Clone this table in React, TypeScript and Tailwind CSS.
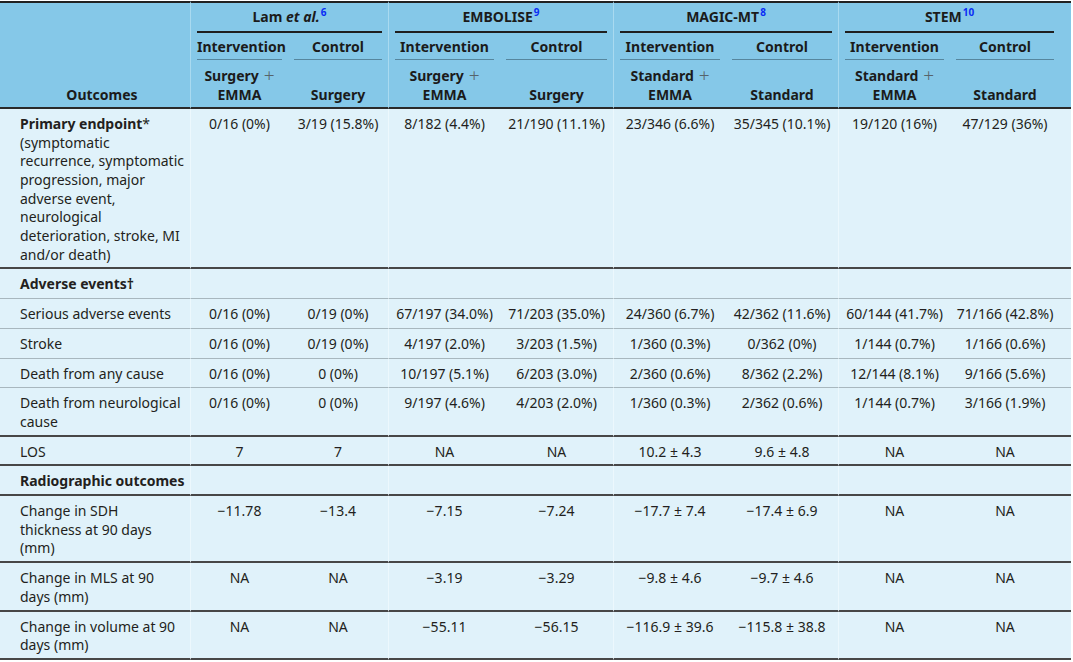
import React from "react";

type Row = {
    label: React.ReactNode;
    cells: string[];
    line: "dark" | "light";
    heading?: boolean;
};

const Sup = ({ n }: { n: string }) => (
    <sup className="text-[10px] font-bold text-[#0a2cf5] relative -top-[6px] ml-[1px]">{n}</sup>
);

const Plus = () => <span className="font-light text-[19px] leading-[0] text-[#56646b] relative top-[1px]"> +</span>;

const rows: Row[] = [
    {
        label: (
            <>
                <span className="font-bold">Primary endpoint</span>*<br />
                (symptomatic<br />
                recurrence, symptomatic<br />
                progression, major<br />
                adverse event,<br />
                neurological<br />
                deterioration, stroke, MI<br />
                and/or death)
            </>
        ),
        cells: ["0/16 (0%)", "3/19 (15.8%)", "8/182 (4.4%)", "21/190 (11.1%)", "23/346 (6.6%)", "35/345 (10.1%)", "19/120 (16%)", "47/129 (36%)"],
        line: "dark",
    },
    { label: "Adverse events†", cells: [], line: "light", heading: true },
    {
        label: "Serious adverse events",
        cells: ["0/16 (0%)", "0/19 (0%)", "67/197 (34.0%)", "71/203 (35.0%)", "24/360 (6.7%)", "42/362 (11.6%)", "60/144 (41.7%)", "71/166 (42.8%)"],
        line: "light",
    },
    {
        label: "Stroke",
        cells: ["0/16 (0%)", "0/19 (0%)", "4/197 (2.0%)", "3/203 (1.5%)", "1/360 (0.3%)", "0/362 (0%)", "1/144 (0.7%)", "1/166 (0.6%)"],
        line: "light",
    },
    {
        label: "Death from any cause",
        cells: ["0/16 (0%)", "0 (0%)", "10/197 (5.1%)", "6/203 (3.0%)", "2/360 (0.6%)", "8/362 (2.2%)", "12/144 (8.1%)", "9/166 (5.6%)"],
        line: "light",
    },
    {
        label: <>Death from neurological<br />cause</>,
        cells: ["0/16 (0%)", "0 (0%)", "9/197 (4.6%)", "4/203 (2.0%)", "1/360 (0.3%)", "2/362 (0.6%)", "1/144 (0.7%)", "3/166 (1.9%)"],
        line: "dark",
    },
    { label: "LOS", cells: ["7", "7", "NA", "NA", "10.2 ± 4.3", "9.6 ± 4.8", "NA", "NA"], line: "dark" },
    { label: "Radiographic outcomes", cells: [], line: "dark", heading: true },
    {
        label: <>Change in SDH<br />thickness at 90 days<br />(mm)</>,
        cells: ["−11.78", "−13.4", "−7.15", "−7.24", "−17.7 ± 7.4", "−17.4 ± 6.9", "NA", "NA"],
        line: "dark",
    },
    {
        label: <>Change in MLS at 90<br />days (mm)</>,
        cells: ["NA", "NA", "−3.19", "−3.29", "−9.8 ± 4.6", "−9.7 ± 4.6", "NA", "NA"],
        line: "dark",
    },
    {
        label: <>Change in volume at 90<br />days (mm)</>,
        cells: ["NA", "NA", "−55.11", "−56.15", "−116.9 ± 39.6", "−115.8 ± 38.8", "NA", "NA"],
        line: "dark",
    },
];

const groups = [
    { name: <>Lam <i>et al.</i><Sup n="6" /></>, arm: "Surgery" },
    { name: <>EMBOLISE<Sup n="9" /></>, arm: "Surgery" },
    { name: <>MAGIC-MT<Sup n="8" /></>, arm: "Standard" },
    { name: <>STEM<Sup n="10" /></>, arm: "Standard" },
];

// first cell of every trial gets the faint divider
const sep = "border-l border-l-[#a9daf0]";

export default function App() {
    return (
        <div className="w-[1073px] h-[662px] bg-white pt-[1px] text-[#231f20] text-[14px] leading-[18.7px]" style={{ fontFamily: '"Noto Sans", "Open Sans", sans-serif' }}>
            <table className="w-[1071px] table-fixed border-separate border-spacing-0">
                <colgroup>
                    <col className="w-[190px]" />
                    <col className="w-[98px]" />
                    <col className="w-[100px]" />
                    <col className="w-[112px]" />
                    <col className="w-[113px]" />
                    <col className="w-[113px]" />
                    <col className="w-[112px]" />
                    <col className="w-[112px]" />
                    <col className="w-[121px]" />
                </colgroup>
                <thead className="bg-[#85c8e8] font-bold text-[#1b1b1b]">
                    <tr>
                        <th rowSpan={3} className="border-t-2 border-t-[#222] border-b-2 border-b-[#2a2a2a] align-bottom pl-[20px] pr-[6px] pb-[2px] text-center">
                            Outcomes
                        </th>
                        {groups.map((g, i) => (
                            <th key={i} colSpan={2} className={`border-t-2 border-t-[#222] px-[6px] ${sep} ${i === 3 ? "pr-[17px]" : ""}`}>
                                <div className="pt-[5px] pb-[4px] border-b-2 border-[#1f1f1f] text-center whitespace-nowrap">{g.name}</div>
                            </th>
                        ))}
                    </tr>
                    <tr>
                        {groups.map((_, i) => (
                            <React.Fragment key={i}>
                                <th className={`px-[6px] ${sep}`}>
                                    <div className="pt-[5px] pb-[3px] border-b border-[#56869e] text-center">Intervention</div>
                                </th>
                                <th className={`px-[6px] ${i === 3 ? "pr-[17px]" : ""}`}>
                                    <div className="pt-[5px] pb-[3px] border-b border-[#56869e] text-center">Control</div>
                                </th>
                            </React.Fragment>
                        ))}
                    </tr>
                    <tr>
                        {groups.map((g, i) => (
                            <React.Fragment key={i}>
                                <th className={`px-[6px] pt-[7px] pb-[2px] align-bottom text-center whitespace-nowrap border-b-2 border-b-[#2a2a2a] ${sep}`}>
                                    {g.arm}
                                    <Plus />
                                    <br />
                                    EMMA
                                </th>
                                <th className={`px-[6px] pb-[2px] align-bottom text-center border-b-2 border-b-[#2a2a2a] ${i === 3 ? "pr-[17px]" : ""}`}>
                                    {g.arm}
                                </th>
                            </React.Fragment>
                        ))}
                    </tr>
                </thead>
                <tbody className="bg-[#e0f2fa]">
                    {rows.map((r, ri) => {
                        const line = r.line === "dark" ? "border-b-2 border-b-[#474747] pb-[3px]" : "border-b border-b-[#a8b7be] pb-[4px]";
                        return (
                            <tr key={ri}>
                                <td className={`pl-[20px] pr-0 pt-[6px] align-top text-left whitespace-nowrap ${line} ${r.heading ? "font-bold" : ""}`}>
                                    {r.label}
                                </td>
                                {Array.from({ length: 8 }).map((_, ci) => (
                                    <td
                                        key={ci}
                                        className={`px-[6px] pt-[6px] align-top text-center whitespace-nowrap ${line} ${ci % 2 === 0 ? "border-l border-l-[#ecf8fd]" : ""} ${ci === 7 ? "pr-[17px]" : ""}`}
                                    >
                                        {r.cells[ci] ?? ""}
                                    </td>
                                ))}
                            </tr>
                        );
                    })}
                </tbody>
            </table>
        </div>
    );
}
